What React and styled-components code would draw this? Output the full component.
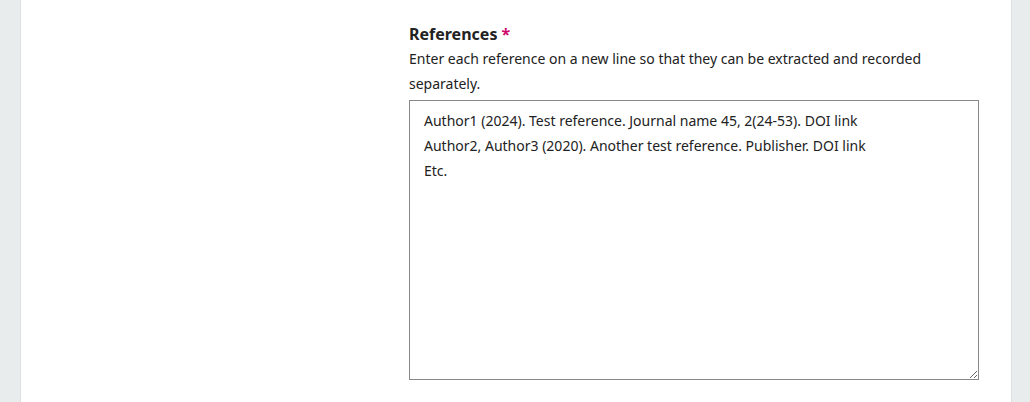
import styled, { createGlobalStyle } from "styled-components";

const GlobalStyle = createGlobalStyle`
  * {
    box-sizing: border-box;
  }

  body {
    margin: 0;
    background: #fff;
    font-family: "Noto Sans", "Open Sans", sans-serif;
    color: #222;
  }
`;

const Page = styled.div`
  display: flex;
  height: 402px;
  overflow: hidden;
`;

const Gutter = styled.div`
  width: ${(p) => p.$width}px;
  flex-shrink: 0;
  background: #e9ecec;
  border-${(p) => p.$side}: 1px solid #dcdfdf;
`;

const Main = styled.main`
  flex: 1;
  display: grid;
  grid-template-columns: 388px 570px;
  padding-top: 22px;
  background: #fff;
`;

const Field = styled.div`
  grid-column: 2;
  display: flex;
  flex-direction: column;
`;

const Label = styled.label`
  font-size: 16px;
  font-weight: 700;
  line-height: 24px;
  color: #222;
`;

const Required = styled.span`
  color: #d00a6c;
`;

const Help = styled.p`
  margin: 0 0 4px;
  font-size: 14px;
  line-height: 25px;
  color: #222;
`;

const TextArea = styled.textarea`
  width: 570px;
  height: 280px;
  padding: 7px 14px;
  border: 1px solid #888;
  border-radius: 0;
  font-family: "Noto Sans", "Open Sans", sans-serif;
  font-size: 14px;
  line-height: 25px;
  color: #222;
  resize: vertical;
  outline: none;
`;

const refs = [
  "Author1 (2024). Test reference. Journal name 45, 2(24-53). DOI link",
  "Author2, Author3 (2020). Another test reference. Publisher. DOI link",
  "Etc.",
].join("\n");

export default function App() {
  return (
    <>
      <GlobalStyle />
      <Page>
        <Gutter $width={21} $side="right" />
        <Main>
          <Field>
            <Label htmlFor="references">
              References <Required>*</Required>
            </Label>
            <Help>
              Enter each reference on a new line so that they can be extracted
              and recorded separately.
            </Help>
            <TextArea id="references" defaultValue={refs} />
          </Field>
        </Main>
        <Gutter $width={19} $side="left" />
      </Page>
    </>
  );
}
